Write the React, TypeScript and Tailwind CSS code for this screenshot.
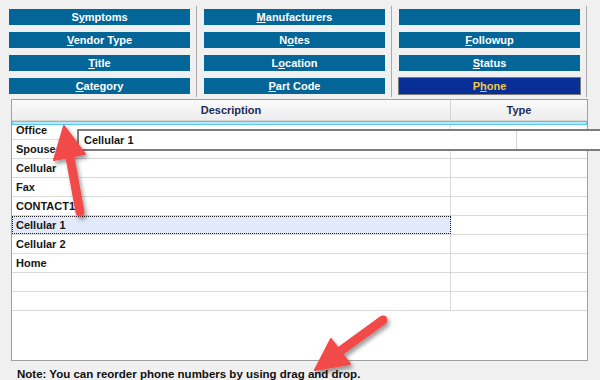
import React from "react";

const font = { fontFamily: '"Liberation Sans", Arial, sans-serif' };

function Btn({ label, u, active }: { label: string; u?: number; active?: boolean }) {
  const parts =
    u === undefined ? (
      <span>{label}</span>
    ) : (
      <span>
        {label.slice(0, u)}
        <span className="underline underline-offset-[1px]">{label[u]}</span>
        {label.slice(u + 1)}
      </span>
    );
  if (active) {
    return (
      <div className="-mx-[1px] -my-[1px] flex h-[18px] items-center justify-center border border-[#7c7c7c] bg-[#072f95] text-[11px] font-bold text-[#f4c842]">
        {parts}
      </div>
    );
  }
  return (
    <div className="flex h-[16px] items-center justify-center bg-[#046698] text-[11px] font-bold text-white">
      {parts}
    </div>
  );
}

function Sep() {
  return <div className="mx-[6px] -my-[3px] w-px shrink-0 bg-[#a9a9a9]" />;
}

const rows = ["Office", "Spouse", "Cellular", "Fax", "CONTACT1", "Cellular 1", "Cellular 2", "Home", "", ""];

export default function App() {
  return (
    <div className="relative h-[380px] w-[600px] overflow-hidden bg-[#f0f0f0]" style={font}>
      {/* Buttons */}
      <div className="flex pl-[9px] pt-[9px]">
        <div className="flex w-[181px] flex-col gap-[7px]">
          <Btn label="Symptoms" u={1} />
          <Btn label="Vendor Type" u={0} />
          <Btn label="Title" u={0} />
          <Btn label="Category" u={0} />
        </div>
        <Sep />
        <div className="ml-[1px] flex w-[181px] flex-col gap-[7px]">
          <Btn label="Manufacturers" u={0} />
          <Btn label="Notes" u={1} />
          <Btn label="Location" u={1} />
          <Btn label="Part Code" u={0} />
        </div>
        <Sep />
        <div className="ml-[1px] flex w-[181px] flex-col gap-[7px]">
          <Btn label="" />
          <Btn label="Followup" u={0} />
          <Btn label="Status" u={0} />
          <Btn label="Phone" u={1} active />
        </div>
        <Sep />
      </div>

      {/* Table */}
      <div className="relative ml-[11px] mt-[5px] h-[262px] w-[577px] border border-[#a0a0a0] bg-white">
        <div className="flex h-[21px] border-b border-[#d5d5d5] bg-gradient-to-b from-[#fafafa] to-[#ededed] text-[11px] font-bold text-[#1c2a5a]">
          <div className="flex w-[439px] items-center justify-center border-r border-[#d5d5d5]">Description</div>
          <div className="flex flex-1 items-center justify-center">Type</div>
        </div>
        {rows.map((r, i) => {
          const sel = r === "Cellular 1";
          return (
            <div key={i} className="flex h-[19px] border-b border-[#dadada] text-[11px] font-bold text-[#161616]">
              <div
                className={
                  sel
                    ? "flex w-[439px] items-center border border-dotted border-[#222] bg-[#e2e9fb] pl-[3px]"
                    : "flex w-[439px] items-center border-r border-[#dadada] pl-[4px]"
                }
              >
                {r}
              </div>
              <div className="flex-1" />
            </div>
          );
        })}
        {/* drop indicator */}
        <div className="absolute left-0 right-0 top-[21px] h-[4px] border border-[#5cc6ec] bg-[#b9e8f8]" />
      </div>

      <div className="ml-[17px] mt-[5px] text-[11.5px] font-bold text-[#111]">
        Note: You can reorder phone numbers by using drag and drop.
      </div>

      {/* drag overlay */}
      <div className="absolute left-[77px] top-[129px] flex h-[22px] w-[540px] border-2 border-[#7d7d7d] bg-white text-[11px] font-bold text-[#161616]">
        <div className="flex w-[438px] items-center border-r border-[#d5d5d5] pl-[5px]">Cellular 1</div>
        <div className="flex-1" />
      </div>

      {/* arrows */}
      <svg className="pointer-events-none absolute inset-0" width="600" height="380">
        <defs>
          <filter id="sh" x="-30%" y="-30%" width="160%" height="160%">
            <feDropShadow dx="2" dy="3" stdDeviation="2" floodColor="#000" floodOpacity="0.4" />
          </filter>
        </defs>
        <g filter="url(#sh)" fill="#f24a4a" stroke="#f24a4a">
          <line x1="70" y1="157" x2="80" y2="212" strokeWidth="9" strokeLinecap="round" />
          <polygon points="64,126 85,154 54,160" strokeWidth="2" strokeLinejoin="round" />
        </g>
        <g filter="url(#sh)" fill="#f24a4a" stroke="#f24a4a">
          <line x1="339" y1="352" x2="383" y2="320" strokeWidth="9" strokeLinecap="round" />
          <polygon points="315,370 331,339 350,364" strokeWidth="2" strokeLinejoin="round" />
        </g>
      </svg>
    </div>
  );
}
